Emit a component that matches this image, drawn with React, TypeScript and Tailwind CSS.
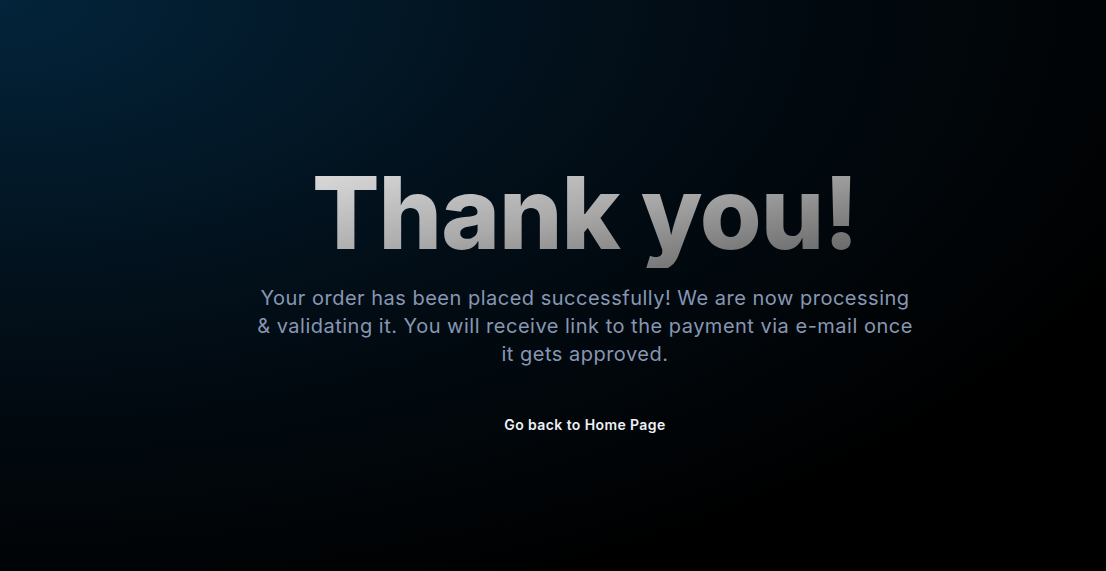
export default function App() {
  return (
    <div className="min-h-[571px] w-full bg-[radial-gradient(ellipse_at_top_left,#03243b_0%,#020c14_45%,#000000_80%)] font-['Inter','Noto_Sans',sans-serif]">
      <div className="flex flex-col items-center pl-16 pt-[158px]">
        <h1 className="bg-gradient-to-br from-[#e2e2e2] via-[#a9a9a9] to-[#5e5e5e] bg-clip-text text-[100px] font-extrabold leading-[1.1] tracking-[-1px] text-transparent">
          Thank you!
        </h1>
        <p className="mt-4 max-w-[664px] text-center text-[20px] leading-[28px] tracking-[0.5px] text-[#8797b3]">
          Your order has been placed successfully! We are now processing &amp; validating it. You will receive link to the payment via e-mail once it gets approved.
        </p>
        <a href="#" className="mt-[46px] text-[14px] font-semibold tracking-[0.4px] text-[#eef0f5]">
          Go back to Home Page
        </a>
      </div>
    </div>
  )
}
